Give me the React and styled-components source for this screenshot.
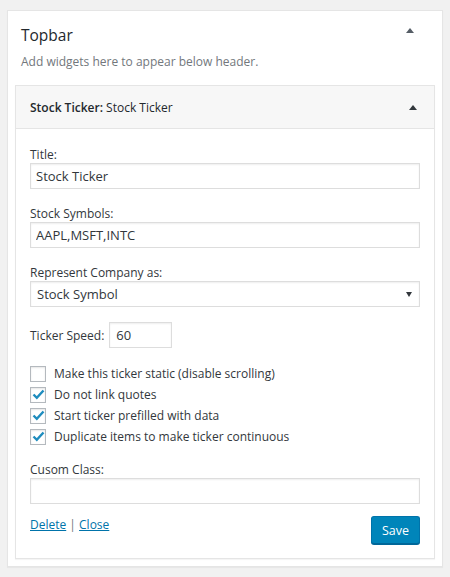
import React from 'react';
import styled, { createGlobalStyle } from 'styled-components';

const GlobalStyle = createGlobalStyle`
  body {
    margin: 0;
    background: #f1f1f1;
    font-family: "Open Sans", "Noto Sans", sans-serif;
    font-size: 12px;
    color: #32373c;
  }
`;

const Sidebar = styled.div`
  margin: 10px 7px 9px;
  background: #fff;
  border: 1px solid #e5e5e5;
  box-shadow: 0 1px 1px rgba(0, 0, 0, 0.04);
  padding: 11px 7px 7px;
`;

const SidebarHead = styled.div`
  display: flex;
  align-items: flex-start;
  justify-content: space-between;
  padding: 0 21px 0 6px;
`;

const SidebarTitle = styled.h2`
  margin: 0;
  font-size: 15.5px;
  line-height: 26px;
  font-weight: 400;
  color: #23282d;
`;

const Arrow = styled.span`
  width: 0;
  height: 0;
  margin-top: ${(p) => p.$top || 0}px;
  border-left: 4px solid transparent;
  border-right: 4px solid transparent;
  border-bottom: 5px solid ${(p) => p.$color || '#555d66'};
`;

const Description = styled.p`
  margin: 4px 0 13px;
  padding: 0 6px;
  font-size: 12px;
  line-height: 20px;
  color: #72777c;
`;

const Widget = styled.div`
  border: 1px solid #e5e5e5;
  background: #fff;
  box-shadow: 0 1px 1px rgba(0, 0, 0, 0.04);
`;

const WidgetTop = styled.div`
  display: flex;
  align-items: center;
  justify-content: space-between;
  height: 42px;
  padding: 0 17px 0 14px;
  background: #f7f7f7;
  border-bottom: 1px solid #e5e5e5;
`;

const WidgetTitle = styled.h3`
  margin: 0;
  font-size: 12px;
  font-weight: 600;
  color: #23282d;
  span {
    font-weight: 400;
  }
`;

const WidgetBody = styled.div`
  padding: 17px 14px 14px;
`;

const Field = styled.div`
  margin-bottom: ${(p) => (p.$gap !== undefined ? p.$gap : 16)}px;
`;

const Label = styled.label`
  display: block;
  line-height: 17px;
  color: #32373c;
`;

const TextInput = styled.input`
  display: block;
  box-sizing: border-box;
  width: ${(p) => p.$width || '100%'};
  height: 26px;
  margin: 0;
  padding: 3px 5px;
  border: 1px solid #ddd;
  box-shadow: inset 0 1px 2px rgba(0, 0, 0, 0.07);
  background: #fff;
  color: #32373c;
  font-family: inherit;
  font-size: 13px;
  outline: none;
`;

const SelectBox = styled.div`
  display: flex;
  align-items: center;
  justify-content: space-between;
  box-sizing: border-box;
  height: 26px;
  padding: 0 7px 0 6px;
  border: 1px solid #ddd;
  box-shadow: inset 0 1px 2px rgba(0, 0, 0, 0.07);
  font-size: 13px;
  color: #32373c;
`;

const SelectArrow = styled.span`
  width: 0;
  height: 0;
  border-left: 3px solid transparent;
  border-right: 3px solid transparent;
  border-top: 5px solid #32373c;
`;

const InlineField = styled.div`
  display: flex;
  align-items: center;
  gap: 5px;
  margin-bottom: 15px;
  ${TextInput} {
    padding-left: 6px;
  }
`;

const CheckList = styled.div`
  display: flex;
  flex-direction: column;
  margin-bottom: 14px;
`;

const CheckRow = styled.label`
  display: flex;
  align-items: center;
  gap: 8px;
  height: 21px;
`;

const Box = styled.span`
  display: flex;
  align-items: center;
  justify-content: center;
  box-sizing: border-box;
  width: 16px;
  height: 16px;
  border: 1px solid #b4b9be;
  background: #fff;
  box-shadow: inset 0 1px 2px rgba(0, 0, 0, 0.1);
`;

const Footer = styled.div`
  display: flex;
  align-items: flex-start;
  justify-content: space-between;
  margin-top: 12px;
`;

const Links = styled.div`
  line-height: 18px;
  color: #72777c;
  a {
    color: #0073aa;
    text-decoration: underline;
  }
`;

const SaveButton = styled.button`
  height: 28px;
  padding: 0 10px;
  border: 1px solid #0073aa;
  border-bottom-color: #006799;
  border-radius: 3px;
  background: #0085ba;
  box-shadow: 0 1px 0 #006799;
  color: #fff;
  font-family: inherit;
  font-size: 12.5px;
  cursor: pointer;
`;

const Check = ({ checked }) => (
  <Box>
    {checked && (
      <svg width="13" height="11" viewBox="0 0 13 11">
        <path d="M1.5 5.5 L4.8 8.8 L11.5 1.5" fill="none" stroke="#1e8cbe" strokeWidth="2.4" />
      </svg>
    )}
  </Box>
);

const options = [
  { label: 'Make this ticker static (disable scrolling)', checked: false },
  { label: 'Do not link quotes', checked: true },
  { label: 'Start ticker prefilled with data', checked: true },
  { label: 'Duplicate items to make ticker continuous', checked: true },
];

export default function App() {
  return (
    <>
      <GlobalStyle />
      <Sidebar>
        <SidebarHead>
          <SidebarTitle>Topbar</SidebarTitle>
          <Arrow $top={6} />
        </SidebarHead>
        <Description>Add widgets here to appear below header.</Description>
        <Widget>
          <WidgetTop>
            <WidgetTitle>
              Stock Ticker:<span> Stock Ticker</span>
            </WidgetTitle>
            <Arrow $color="#32373c" />
          </WidgetTop>
          <WidgetBody>
            <Field>
              <Label>Title:</Label>
              <TextInput defaultValue="Stock Ticker" />
            </Field>
            <Field>
              <Label>Stock Symbols:</Label>
              <TextInput defaultValue="AAPL,MSFT,INTC" />
            </Field>
            <Field $gap={15}>
              <Label>Represent Company as:</Label>
              <SelectBox>
                Stock Symbol
                <SelectArrow />
              </SelectBox>
            </Field>
            <InlineField>
              <Label>Ticker Speed:</Label>
              <TextInput $width="63px" defaultValue="60" />
            </InlineField>
            <CheckList>
              {options.map((o) => (
                <CheckRow key={o.label}>
                  <Check checked={o.checked} />
                  {o.label}
                </CheckRow>
              ))}
            </CheckList>
            <Field $gap={0}>
              <Label>Cusom Class:</Label>
              <TextInput />
            </Field>
            <Footer>
              <Links>
                <a href="#delete">Delete</a> | <a href="#close">Close</a>
              </Links>
              <SaveButton>Save</SaveButton>
            </Footer>
          </WidgetBody>
        </Widget>
      </Sidebar>
    </>
  );
}
